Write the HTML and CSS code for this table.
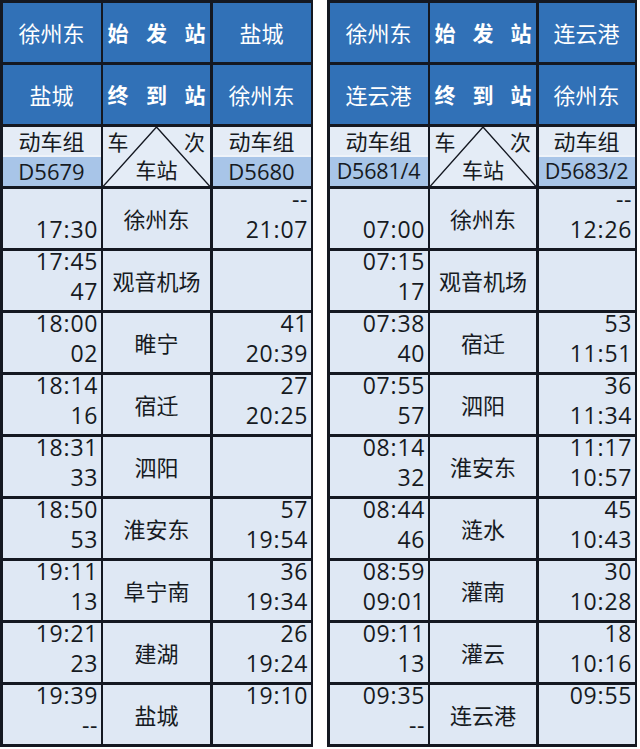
FILE: index.html
```html
<!DOCTYPE html>
<html lang="zh-CN">
<head>
<meta charset="utf-8">
<title>时刻表</title>
<link rel="stylesheet" href="styles.css">
</head>
<body>
<div class="page">
  <div class="sheet sheet-left">
    <div class="cell head">徐州东</div>
    <div class="cell head key"><span>始</span><span>发</span><span>站</span></div>
    <div class="cell head">盐城</div>
    <div class="cell head">盐城</div>
    <div class="cell head key"><span>终</span><span>到</span><span>站</span></div>
    <div class="cell head">徐州东</div>

    <div class="cell sub"><div class="sub-label">动车组</div><div class="sub-code">D5679</div></div>
    <div class="cell corner">
      <svg class="diag" viewBox="0 0 100 100" preserveAspectRatio="none"><polyline points="0,100 50,0 100,100" fill="none" stroke="#141821" stroke-width="1.4" vector-effect="non-scaling-stroke"/></svg>
      <div class="corner-top"><span>车</span><span>次</span></div>
      <div class="corner-bottom">车站</div>
    </div>
    <div class="cell sub"><div class="sub-label">动车组</div><div class="sub-code">D5680</div></div>

    <div class="cell time"><span></span><span>17:30</span></div>
    <div class="cell stn">徐州东</div>
    <div class="cell time"><span>--</span><span>21:07</span></div>

    <div class="cell time"><span>17:45</span><span>47</span></div>
    <div class="cell stn">观音机场</div>
    <div class="cell time"><span></span><span></span></div>

    <div class="cell time"><span>18:00</span><span>02</span></div>
    <div class="cell stn">睢宁</div>
    <div class="cell time"><span>41</span><span>20:39</span></div>

    <div class="cell time"><span>18:14</span><span>16</span></div>
    <div class="cell stn">宿迁</div>
    <div class="cell time"><span>27</span><span>20:25</span></div>

    <div class="cell time"><span>18:31</span><span>33</span></div>
    <div class="cell stn">泗阳</div>
    <div class="cell time"><span></span><span></span></div>

    <div class="cell time"><span>18:50</span><span>53</span></div>
    <div class="cell stn">淮安东</div>
    <div class="cell time"><span>57</span><span>19:54</span></div>

    <div class="cell time"><span>19:11</span><span>13</span></div>
    <div class="cell stn">阜宁南</div>
    <div class="cell time"><span>36</span><span>19:34</span></div>

    <div class="cell time"><span>19:21</span><span>23</span></div>
    <div class="cell stn">建湖</div>
    <div class="cell time"><span>26</span><span>19:24</span></div>

    <div class="cell time"><span>19:39</span><span>--</span></div>
    <div class="cell stn">盐城</div>
    <div class="cell time"><span>19:10</span><span></span></div>
  </div>

  <div class="sheet sheet-right">
    <div class="cell head">徐州东</div>
    <div class="cell head key"><span>始</span><span>发</span><span>站</span></div>
    <div class="cell head">连云港</div>
    <div class="cell head">连云港</div>
    <div class="cell head key"><span>终</span><span>到</span><span>站</span></div>
    <div class="cell head">徐州东</div>

    <div class="cell sub"><div class="sub-label">动车组</div><div class="sub-code narrow">D5681/4</div></div>
    <div class="cell corner">
      <svg class="diag" viewBox="0 0 100 100" preserveAspectRatio="none"><polyline points="0,100 50,0 100,100" fill="none" stroke="#141821" stroke-width="1.4" vector-effect="non-scaling-stroke"/></svg>
      <div class="corner-top"><span>车</span><span>次</span></div>
      <div class="corner-bottom">车站</div>
    </div>
    <div class="cell sub"><div class="sub-label">动车组</div><div class="sub-code narrow">D5683/2</div></div>

    <div class="cell time"><span></span><span>07:00</span></div>
    <div class="cell stn">徐州东</div>
    <div class="cell time"><span>--</span><span>12:26</span></div>

    <div class="cell time"><span>07:15</span><span>17</span></div>
    <div class="cell stn">观音机场</div>
    <div class="cell time"><span></span><span></span></div>

    <div class="cell time"><span>07:38</span><span>40</span></div>
    <div class="cell stn">宿迁</div>
    <div class="cell time"><span>53</span><span>11:51</span></div>

    <div class="cell time"><span>07:55</span><span>57</span></div>
    <div class="cell stn">泗阳</div>
    <div class="cell time"><span>36</span><span>11:34</span></div>

    <div class="cell time"><span>08:14</span><span>32</span></div>
    <div class="cell stn">淮安东</div>
    <div class="cell time"><span>11:17</span><span>10:57</span></div>

    <div class="cell time"><span>08:44</span><span>46</span></div>
    <div class="cell stn">涟水</div>
    <div class="cell time"><span>45</span><span>10:43</span></div>

    <div class="cell time"><span>08:59</span><span>09:01</span></div>
    <div class="cell stn">灌南</div>
    <div class="cell time"><span>30</span><span>10:28</span></div>

    <div class="cell time"><span>09:11</span><span>13</span></div>
    <div class="cell stn">灌云</div>
    <div class="cell time"><span>18</span><span>10:16</span></div>

    <div class="cell time"><span>09:35</span><span>--</span></div>
    <div class="cell stn">连云港</div>
    <div class="cell time"><span>09:55</span><span></span></div>
  </div>
</div>
</body>
</html>
```

FILE: styles.css
```css
html, body {
  margin: 0;
  padding: 0;
  background: #ffffff;
}

body {
  font-family: "Open Sans", "Noto Sans CJK SC", sans-serif;
  color: #161a22;
  width: 640px;
  height: 749px;
  overflow: hidden;
}

.page {
  display: flex;
  gap: 14px;
}

.sheet {
  display: grid;
  background: #141821;
  padding: 2.5px;
  gap: 2.5px;
  grid-template-rows: repeat(12, 59.5px);
}

.sheet-left {
  width: 313px;
  box-sizing: border-box;
  grid-template-columns: 98px 107px 1fr;
}

.sheet-right {
  width: 310px;
  box-sizing: border-box;
  grid-template-columns: 98px 106px 1fr;
}

.cell {
  background: #dfe8f4;
  min-width: 0;
}

.head {
  background: #3171b7;
  color: #ffffff;
  font-size: 22px;
  display: flex;
  align-items: center;
  justify-content: center;
}

.head.key {
  font-weight: 700;
  font-size: 21px;
  justify-content: space-between;
  padding: 0 4.5px;
}

.sub {
  display: flex;
  flex-direction: column;
  background: #eef3f9;
}

.sub-label {
  height: 28px;
  line-height: 28px;
  background: #e4ecf6;
  font-size: 22px;
  text-align: center;
  white-space: nowrap;
}

.sub-code {
  margin-top: 2px;
  flex: 1;
  background: #a8c5e8;
  font-size: 22px;
  line-height: 26px;
  display: flex;
  align-items: center;
  justify-content: center;
  white-space: nowrap;
}

.sub-code.narrow {
  font-size: 21.5px;
  letter-spacing: -0.2px;
}

.corner {
  position: relative;
  background: #e4ecf6;
  display: grid;
  grid-template-rows: 1fr 1fr;
  font-size: 21px;
  line-height: 26px;
}

.diag {
  position: absolute;
  inset: 0;
  width: 100%;
  height: 100%;
}

.corner-top {
  display: flex;
  justify-content: space-between;
  align-items: center;
  padding: 2px 5px 0 4.5px;
}

.corner-bottom {
  display: flex;
  align-items: center;
  justify-content: center;
  padding-bottom: 2px;
}

.time {
  display: flex;
  flex-direction: column;
  align-items: flex-end;
  gap: 6px;
  padding-right: 2.2px;
  font-size: 23px;
  letter-spacing: 0.8px;
}

.time span {
  display: block;
  height: 24px;
  line-height: 24px;
  margin-top: -2px;
  white-space: nowrap;
}

.time span + span {
  margin-top: 0;
}

.stn {
  display: flex;
  align-items: center;
  justify-content: center;
  font-size: 22px;
  white-space: nowrap;
}
```
